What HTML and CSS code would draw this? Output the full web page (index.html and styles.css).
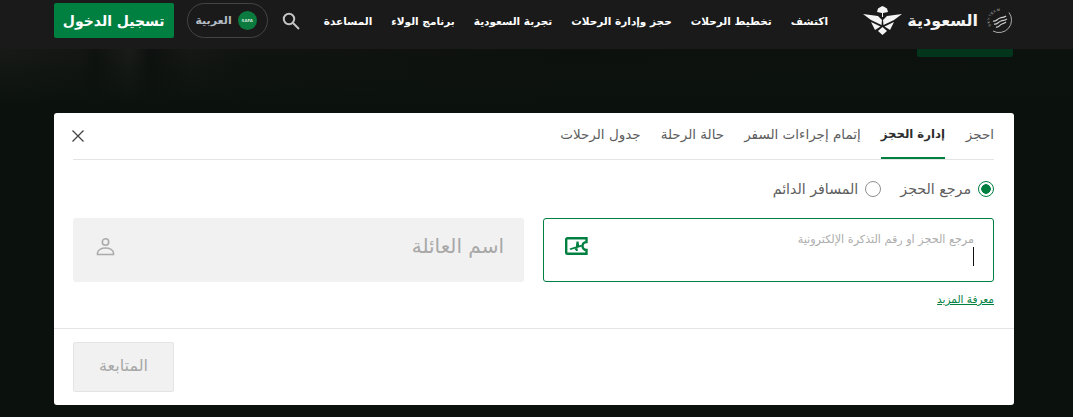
FILE: index.html
```html
<!DOCTYPE html>
<html lang="ar" dir="rtl">
<head>
  <meta charset="UTF-8">
  <title>إدارة الحجز</title>
  <link rel="stylesheet" href="styles.css">
</head>
<body>

<header class="topbar">
  <div class="brand">
    <svg class="skyteam" width="29" height="26" viewBox="0 0 29 26" fill="none" stroke="#d0d0d0">
      <path id="skyteam-ring" d="M6.300 18A10 10 0 0 1 20 4.300" stroke="none"/>
      <text class="skyteam-text" fill="#bdbdbd" stroke="none"><textPath href="#skyteam-ring">SKYTEAM</textPath></text>
      <path d="M24 4.500A12.500 12.500 0 0 1 8 23" stroke-width="0.8"/>
      <path d="M8 13c3 1 4-2 7-3s4 0 6-2M9 16c3 1 4-2 7-3s3 0 6-2M11 19c3 1 3-2 6-3s3-1 4-2" stroke-width="1.200"/>
    </svg>
    <span class="wordmark">السعودية</span>
    <svg class="emblem" width="39" height="29" viewBox="0 0 39 29" fill="#f4f4f4">
      <path d="M0 8 L15 10 L19 14 L18.500 19 L8 14 Z"/>
      <path d="M39 8 L24 10 L20 14 L20.500 19 L31 14 Z"/>
      <path d="M8 16 L17.500 20.500 L12 24 Z"/>
      <path d="M31 16 L21.500 20.500 L27 24 Z"/>
      <path d="M19.500 21 L24 25 L19.500 29 L15 25 Z"/>
      <path d="M14 6 L15 2.500 L17.500 1 L19.500 0 L21.500 1 L24 2.500 L25 6 L20 7 L20 11 L19 11 L19 7 Z"/>
    </svg>
  </div>

  <nav class="main-nav">
    <a href="#">اكتشف</a>
    <a href="#">تخطيط الرحلات</a>
    <a href="#">حجز وإدارة الرحلات</a>
    <a href="#">تجربة السعودية</a>
    <a href="#">برنامج الولاء</a>
    <a href="#">المساعدة</a>
  </nav>

  <svg class="search-icon" width="18" height="18" viewBox="0 0 18 18" fill="none" stroke="#c4c4c4" stroke-width="2">
    <circle cx="7" cy="7" r="5.200"/>
    <path d="M11 11l6 6"/>
  </svg>

  <button class="lang-btn" type="button">
    <span class="flag">SAFA</span>
    <span>العربية</span>
  </button>

  <button class="login-btn" type="button">تسجيل الدخول</button>
</header>

<main class="hero">
  <div class="hero-cta"></div>

  <section class="panel">
    <div class="panel-body">
      <div class="tab-row">
        <div class="tabs">
          <a href="#">احجز</a>
          <a href="#" class="active">إدارة الحجز</a>
          <a href="#">إتمام إجراءات السفر</a>
          <a href="#">حالة الرحلة</a>
          <a href="#">جدول الرحلات</a>
        </div>
        <svg class="close-icon" width="12" height="12" viewBox="0 0 12 12" stroke="#444" stroke-width="1.300">
          <path d="M.5.500l11 11M11.500.500l-11 11"/>
        </svg>
      </div>

      <div class="radios">
        <label class="radio checked"><i></i>مرجع الحجز</label>
        <label class="radio"><i></i>المسافر الدائم</label>
      </div>

      <div class="fields">
        <div class="field field-ref">
          <div class="field-text">
            <span class="field-label">مرجع الحجز او رقم التذكرة الإلكترونية</span>
            <span class="caret"></span>
          </div>
          <svg width="23" height="18" viewBox="0 0 23 18" fill="none">
            <path d="M2.500 1.200h19v3.800a4 4 0 0 0 0 8v3.800h-19a1.300 1.300 0 0 1-1.300-1.300V2.500a1.300 1.300 0 0 1 1.300-1.300z" stroke="#008040" stroke-width="2.400"/>
            <path d="M4.500 11.500L16.500 7.800l.5 1.800-11.500 3.400zM11.500 4.500h2l.8 4.500-3.500 1zM9.500 12l3-1 .3 3h-1.600z" fill="#008040"/>
          </svg>
        </div>
        <div class="field field-name">
          <span class="name-label">اسم العائلة</span>
          <svg width="19" height="19" viewBox="0 0 19 19" fill="none" stroke="#ababab" stroke-width="1.600">
            <circle cx="9.500" cy="5" r="3.200"/>
            <path d="M1.500 17.500v-1.500c0-3 4-5 8-5s8 2 8 5v1.500z"/>
          </svg>
        </div>
      </div>

      <a class="more-link" href="#">معرفة المزيد</a>
    </div>

    <div class="panel-foot">
      <button class="next-btn" type="button" disabled>المتابعة</button>
    </div>
  </section>
</main>

</body>
</html>
```
FILE: styles.css
```css
* {
  box-sizing: border-box;
}

html, body {
  height: 100%;
}

body {
  margin: 0;
  overflow: hidden;
  font-family: "DejaVu Sans", "Noto Sans", sans-serif;
  background-color: #0b120d;
  color: #4a4a4a;
}

a {
  text-decoration: none;
  color: inherit;
}

/* top bar */
.topbar {
  height: 49px;
  padding: 3px 59px 11px 54px;
  background-color: #1a1a1a;
  display: flex;
  align-items: center;
  color: #fff;
  white-space: nowrap;
}

.topbar > * {
  flex: none;
}

.brand {
  display: flex;
  align-items: center;
  margin-left: 35px;
}

.wordmark {
  width: 71px;
  margin: 0 7px 0 5px;
  font-size: 16px;
  font-weight: bold;
  color: #f4f4f4;
  line-height: 26px;
}

.skyteam-text {
  direction: ltr;
  font-family: "Liberation Sans", sans-serif;
  font-size: 3.600px;
  letter-spacing: 0.6px;
}

.main-nav {
  display: flex;
  gap: 19px;
  font-size: 10.500px;
  font-weight: bold;
}

.search-icon {
  margin: 0 24px 0 14px;
}

.lang-btn {
  width: 81px;
  height: 35px;
  margin-left: 13px;
  padding: 0 10px;
  background: none;
  border: 1px solid #444;
  border-radius: 18px;
  display: flex;
  align-items: center;
  gap: 6px;
  font-family: inherit;
  font-size: 11px;
  font-weight: bold;
  color: #b4bcc4;
}

.flag {
  width: 19px;
  height: 19px;
  border-radius: 50%;
  background-color: #0a7a3e;
  color: #cfe5d8;
  font-size: 4px;
  line-height: 19px;
  text-align: center;
  flex: none;
}

.login-btn {
  width: 120px;
  height: 35px;
  background-color: #008040;
  border: none;
  border-radius: 2px;
  color: #fff;
  font-family: inherit;
  font-size: 14px;
  font-weight: bold;
}

/* hero */
.hero {
  height: 368px;
  padding: 0 59px 0 54px;
  background:
    linear-gradient(rgba(11,18,13,0), #0b120d 55px),
    linear-gradient(90deg, #181a18 0, #141614 80px, #0f120f 95px, #1a1c1a 130px, #0e110f 150px, #161816 190px, #111411 240px, #0d110e 560px, #0c120e 100%);
}

.hero-cta {
  width: 96px;
  height: 8px;
  margin-right: 1px;
  background-color: #03351c;
  border-radius: 0 0 2px 2px;
}

/* booking panel */
.panel {
  width: 960px;
  height: 292px;
  margin-top: 56px;
  background-color: #fff;
  border-radius: 3px;
}

.panel-body {
  height: 216px;
  padding: 0 20px 0 19px;
  border-bottom: 1px solid #e4e4e4;
}

.tab-row {
  height: 47px;
  display: flex;
  justify-content: space-between;
  align-items: center;
  border-bottom: 1px solid #e4e4e4;
}

.tabs {
  height: 46px;
  display: flex;
  gap: 20px;
  font-size: 13.500px;
  color: #5d5d5d;
}

.tabs a {
  height: 46px;
  line-height: 42px;
}

.tabs a:first-child {
  min-width: 29px;
}

.tabs a.active {
  font-size: 11.700px;
  font-weight: bold;
  color: #2e2e2e;
  border-bottom: 2px solid #008040;
}

.close-icon {
  margin-left: -1px;
}

.radios {
  height: 58px;
  padding-top: 20px;
  display: flex;
  gap: 19px;
  font-size: 14.200px;
  color: #5d5d5d;
}

.radio {
  height: 18px;
  display: flex;
  align-items: center;
  gap: 7px;
}

.radio i {
  width: 16px;
  height: 16px;
  border: 1px solid #8f8f8f;
  border-radius: 50%;
}

.radio.checked i {
  border: 1.500px solid #008040;
  background: radial-gradient(circle, #008040 0 4.500px, #fff 5px);
}

.fields {
  display: grid;
  grid-template-columns: 1fr 1fr;
  gap: 19px;
}

.field {
  height: 64px;
  border-radius: 3px;
  display: flex;
  justify-content: space-between;
}

.field-ref {
  padding: 14px 19px 0 21px;
  border: 1px solid #008040;
}

.field-ref svg {
  margin-top: 4px;
}

.field-text {
  display: flex;
  flex-direction: column;
  align-items: flex-start;
}

.field-label {
  font-size: 11.200px;
  line-height: 13px;
  color: #adadad;
}

.caret {
  width: 1px;
  height: 19px;
  margin-top: 1px;
  background-color: #111;
}

.field-name {
  padding: 0 20px 8px 23px;
  align-items: center;
  background-color: #f1f1f1;
}

.name-label {
  font-size: 20px;
  color: #a8a8a8;
}

.more-link {
  display: inline-block;
  margin-top: 9px;
  font-size: 10.500px;
  line-height: 16px;
  color: #008040;
  text-decoration: underline;
}

.panel-foot {
  padding: 13px 19px;
}

.next-btn {
  display: block;
  margin-right: auto;
  width: 101px;
  height: 50px;
  padding-bottom: 5px;
  background-color: #f1f1f1;
  border: 1px solid #e4e4e4;
  border-radius: 2px;
  font-family: inherit;
  font-size: 16px;
  color: #a8a8a8;
}
```
